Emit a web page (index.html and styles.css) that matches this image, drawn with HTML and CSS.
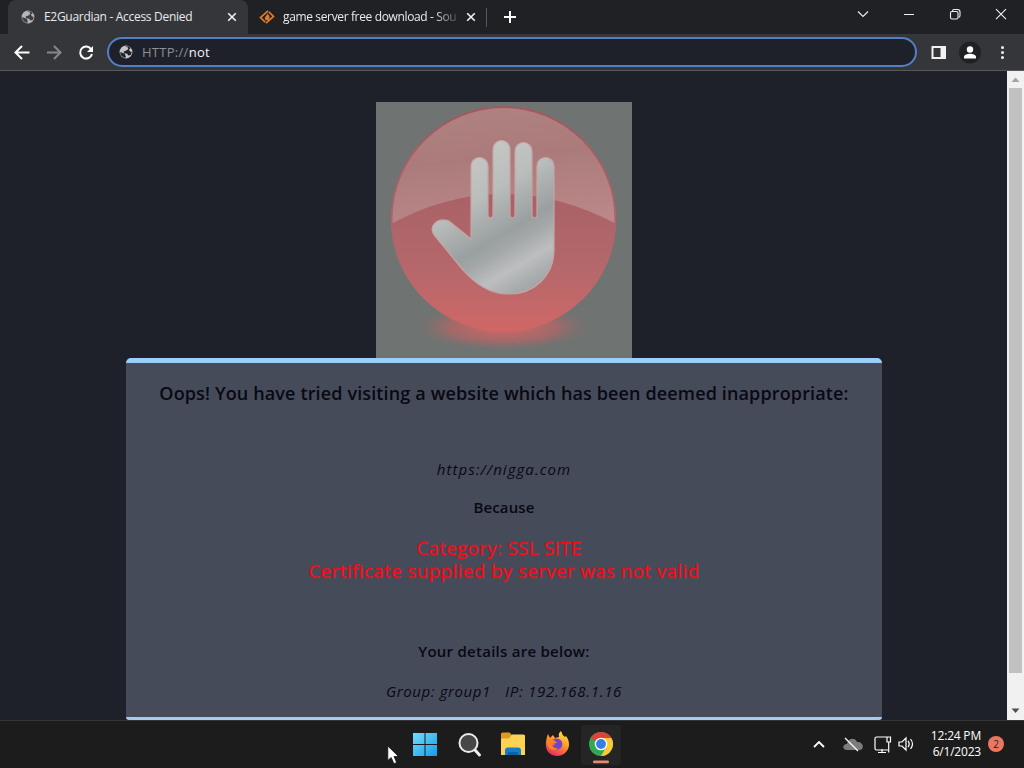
FILE: index.html
```html
<!DOCTYPE html>
<html lang="en">
<head>
<meta charset="utf-8">
<title>E2Guardian - Access Denied</title>
<link rel="stylesheet" href="styles.css">
</head>
<body>
<div class="screen">
  <header class="tabstrip">
    <div class="tab active">
      <svg class="globe" viewBox="0 0 24 24"><circle cx="12" cy="12" r="11" fill="#b4b6b8"/><path d="M2 12l8 3 2 6-3 1C5 20 2 17 2 12zM10 3l5 1 1 3-4 3-4 1 1 3 5 1 2 3 4-1 2-5-3-1-2-3 3-3-4-3z" fill="#3d3f43"/></svg>
      <span class="tab-title t1">E2Guardian - Access Denied</span>
      <svg class="x" viewBox="0 0 10 10"><path d="M1.2 1.2l7.6 7.6M8.8 1.2L1.2 8.8" stroke="#f1f1f1" stroke-width="1.6"/></svg>
    </div>
    <div class="tab second">
      <svg class="sf" viewBox="0 0 16 16"><path d="M9 1.800L1.500 8.500l4.700 4.700M9.800 2.800l4.700 4.700L7 14.200" fill="none" stroke="#dd7b2c" stroke-width="1.700"/><path d="M8.300 4.500c1.800 1.700 2.500 3 2.300 4.500-.3 1.600-1.300 2.300-2.500 2.300-1.500 0-2.400-1-2.200-2.600.2-1.200 2.100-1.900 2.400-4.200z" fill="#dd7b2c"/></svg>
      <span class="tab-title t2">game server free download - Sou</span>
      <svg class="x" viewBox="0 0 10 10"><path d="M1.2 1.2l7.600 7.600M8.800 1.200L1.200 8.800" stroke="#f1f1f1" stroke-width="1.600"/></svg>
    </div>
    <svg class="plus" viewBox="0 0 12 12"><path d="M6 0v12M0 6h12" stroke="#fff" stroke-width="2"/></svg>
    <svg class="winctl" viewBox="0 0 164 34" fill="none" stroke="#f0f0f0" stroke-width="1.100"><path d="M13 11.500l5 5 5-5M59 14.500h10M161 9.200l-10 10M151 9.200l10 10"/><rect x="105.500" y="11.500" width="7.500" height="7.500" rx="1.500"/><path d="M107.500 11.500V11c0-1 .8-1.500 1.500-1.500h3.500c1.500 0 2.500 1 2.500 2.500v3.500c0 1-.7 1.800-1.500 1.800"/></svg>
  </header>
  <nav class="toolbar">
    <svg class="navicons" viewBox="0 0 100 34" fill="none" stroke-width="2"><path d="M29.500 17.500H16M22 11l-6.500 6.500L22 24" stroke="#fff"/><path d="M47 17.500h13.500M54 11l6.500 6.500L54 24" stroke="#85878b"/><path d="M91.200 14.200A6 6 0 1 0 92 19" stroke="#fff"/><path d="M93 11v6h-6z" fill="#fff"/></svg>
    <div class="address">
      <svg class="globe" viewBox="0 0 24 24"><circle cx="12" cy="12" r="11" fill="#c2c4c6"/><path d="M2 12l8 3 2 6-3 1C5 20 2 17 2 12zM10 3l5 1 1 3-4 3-4 1 1 3 5 1 2 3 4-1 2-5-3-1-2-3 3-3-4-3z" fill="#1f222b"/></svg>
      <span class="url"><span class="scheme">HTTP://</span>not</span>
    </div>
    <svg class="tools" viewBox="0 0 107 34"><path d="M15.500 12H28v11H15.500z" fill="none" stroke="#f1f1f1" stroke-width="2"/><path d="M23.500 11H29v13h-5.500z" fill="#f1f1f1"/><circle cx="53" cy="17.500" r="11" fill="#202124"/><circle cx="53" cy="14.500" r="3.200" fill="#fff"/><path d="M47 23.500v-1.700c0-2 3.500-3.100 6-3.100s6 1.100 6 3.100v1.700z" fill="#fff"/><g fill="#f1f1f1"><circle cx="85.500" cy="12.500" r="1.500"/><circle cx="85.500" cy="17.500" r="1.500"/><circle cx="85.500" cy="22.500" r="1.500"/></g></svg>
  </nav>
  <main class="viewport">
    <div class="page">
      <svg class="stop" viewBox="0 0 256 256">
        <defs>
          <linearGradient id="red" x1="0" y1="0" x2="0" y2="1"><stop offset="0" stop-color="#a7555e"/><stop offset=".5" stop-color="#ac6469"/><stop offset=".75" stop-color="#b7686b"/><stop offset="1" stop-color="#d06766"/></linearGradient>
          <linearGradient id="gloss" x1="0" y1="0" x2=".2" y2="1"><stop offset="0" stop-color="#b18382"/><stop offset=".5" stop-color="#ab7b7c"/><stop offset="1" stop-color="#bb8788"/></linearGradient>
          <linearGradient id="palm" gradientUnits="userSpaceOnUse" x1="75" y1="50" x2="155" y2="185"><stop offset="0" stop-color="#c9cac7"/><stop offset=".35" stop-color="#b9bdbb"/><stop offset=".62" stop-color="#9a9fa0"/><stop offset=".7" stop-color="#a3a7a8"/><stop offset=".84" stop-color="#bcbebf"/><stop offset="1" stop-color="#a2a6a7"/></linearGradient>
          <radialGradient id="glow"><stop offset="0" stop-color="#d86565"/><stop offset=".6" stop-color="#ac6767" stop-opacity=".8"/><stop offset="1" stop-color="#707473" stop-opacity="0"/></radialGradient>
          <clipPath id="disc"><circle cx="127.500" cy="117" r="111"/></clipPath>
        </defs>
        <path d="M0 0h256v256H0z" fill="#6f7372"/>
        <ellipse cx="127" cy="225" rx="92" ry="25" fill="url(#glow)"/>
        <circle cx="127.500" cy="117" r="112.800" fill="url(#red)"/>
        <path d="M0 0h256v131Q192 92 127 92T0 131z" fill="url(#gloss)" clip-path="url(#disc)"/>
        <path d="M95 137V64a8.500 8.500 0 0 1 17 0v50q2.500 4 5 0V47a8.500 8.500 0 0 1 17 0v67q2.500 4 5 0V49a8.500 8.500 0 0 1 17 0v65q2.500 4 5 0V64a8.500 8.500 0 0 1 17 0v84c0 26-20 44-45 44-20 0-33-10-46-24l-28-34c-8-9 2-19 14-15z" fill="url(#palm)" stroke="#c6a5a4" stroke-width="1.200"/>
      </svg>
      <section class="card">
        <h1><span>Oops! You have tried visiting a website which has been deemed inappropriate:</span></h1>
        <p class="site"><span>https://nigga.com</span></p>
        <p class="because"><span>Because</span></p>
        <p class="reason r1"><span>Category: SSL SITE</span></p>
        <p class="reason r2"><span>Certificate supplied by server was not valid</span></p>
        <p class="below"><span>Your details are below:</span></p>
        <p class="details"><span class="grp">Group: group1</span><span class="ip">IP: 192.168.1.16</span></p>
      </section>
    </div>
    <aside class="scroll">
      <svg viewBox="0 0 17 17"><path d="M4.500 11h8l-4-4.500z" fill="#a3a3a3"/></svg>
      <div class="thumb"></div>
      <svg viewBox="0 0 17 17"><path d="M4.500 6.500h8l-4 4.500z" fill="#505050"/></svg>
    </aside>
  </main>
  <footer class="taskbar">
    <div class="apps">
      <svg viewBox="0 0 40 44"><defs><linearGradient id="win" x1="0" y1="0" x2="1" y2="1"><stop offset="0" stop-color="#76dcfa"/><stop offset="1" stop-color="#139cec"/></linearGradient></defs><path d="M8 10h11.500v11H8zM20.500 10H32v11H20.500zM8 22h11.500v11H8zM20.500 22H32v11H20.500z" fill="url(#win)"/></svg>
      <svg viewBox="0 0 40 44"><path d="M26 27l4.500 5" stroke="#eee" stroke-width="3" stroke-linecap="round"/><circle cx="19.500" cy="20" r="9" fill="#474747" stroke="#ececec" stroke-width="2"/></svg>
      <svg viewBox="0 0 40 44"><path d="M8 11q0-1.500 1.500-1.500h7l3 3H32v19H8z" fill="#d99c1d"/><path d="M8 15.500h8l3-4h11.500q1.500 0 1.500 1.500v19H8z" fill="#fcd354"/><path d="M12 32v-4.500q0-3 3-3h10q3 0 3 3V32z" fill="#167bc8"/><path d="M15 29h10v3H15z" fill="#0c60a8"/></svg>
      <svg viewBox="0 0 40 44"><defs><linearGradient id="ff" x1=".8" y1="0" x2=".3" y2="1"><stop offset="0" stop-color="#ffe84a"/><stop offset=".45" stop-color="#ff9c27"/><stop offset="1" stop-color="#ed2563"/></linearGradient></defs><path d="M11 11l2 4 3-3 2 3 4-1q-1-4 2-6 1 4 4 6l1-1c4 5 4 12 0 16-5 6-16 5-19-2-2-5-1-11 1-16z" fill="url(#ff)"/><path d="M15 17c5-4 12 0 10 6-2 5-9 5-11 0l4-1-4-3z" fill="#7145ce"/><path d="M10 18c3-2 6-2 8 0l2 2-5 1c0 3 3 5 6 4-4 5-11 1-11-7z" fill="#ff8124"/></svg>
      <div class="chrome"><svg viewBox="0 0 40 40"><circle cx="20" cy="19" r="12" fill="#32a853"/><path d="M20 19L9.600 13A12 12 0 0 1 30.400 13z" fill="#db4538"/><path d="M20 13h10.400A12 12 0 0 1 20 31l5.200-9z" fill="#fbc934"/><circle cx="20" cy="19" r="6.300" fill="#fff"/><circle cx="20" cy="19" r="4.900" fill="#347fe5"/><rect x="12" y="35.500" width="16" height="2.800" rx="1.200" fill="#e68a70"/></svg></div>
    </div>
    <svg class="tray" viewBox="0 0 110 48" fill="none" stroke="#fff" stroke-width="1.200"><path d="M9 26l5-5 5 5" stroke-width="1.800"/><path d="M42 29c-5 0-5-6 0-6 1-6 8-7 10-2 6-1 8 7 3 8z" fill="#7c7c7c" stroke="none"/><path d="M40 17l13 13"/><path d="M82 16H71.500q-1.500 0-1.500 1.500v10q0 1.500 1.500 1.500H83M77 28v3.500M73 31.500h8M82 16h3.500v5H82zM83.700 21v10.500M94 21h3l4-4v12l-4-4h-3zM103 20q2.500 3 0 6M105.500 18q4 5 0 10"/></svg>
    <div class="clock"><span class="time">12:24 PM</span><span class="date">6/1/2023</span></div>
    <div class="badge">2</div>
  </footer>
  <svg class="cursor" viewBox="0 0 13 20"><path d="M.8 1v14.500l3.400-3 2.700 6.200 2.800-1.200-2.700-6h4.500z" fill="#fff" stroke="#111" stroke-width=".8"/></svg>
</div>
</body>
</html>
```
FILE: styles.css
```css
* { box-sizing: border-box; }
body { margin: 0; font-family: "Open Sans", "Noto Sans", sans-serif; }
svg { display: block; flex: none; }
h1, p { margin: 0; }
.screen { position: relative; width: 1024px; height: 768px; overflow: hidden; display: flex; flex-direction: column; background: #1f212a; }

.tabstrip { height: 34px; flex: none; display: flex; align-items: center; background: #202124; color: #e9eaed; }
.tab { height: 34px; display: flex; align-items: center; font-size: 12px; }
.active { width: 240px; margin-left: 8px; padding-left: 13px; background: #35363a; border-radius: 8px 8px 0 0; }
.second { width: 239px; padding-left: 11px; }
.second::after { content: ""; width: 1px; height: 19px; margin-left: 10px; background: #55575b; }
.globe { width: 14px; height: 14px; }
.sf { width: 16px; height: 16px; }
.tab-title { white-space: nowrap; line-height: 18px; flex: none; }
.t1 { width: 183px; margin-left: 9px; letter-spacing: -.3px; }
.t2 { width: 175px; margin: 0 8px; letter-spacing: -.36px; -webkit-mask-image: linear-gradient(90deg, #000 150px, transparent 180px); mask-image: linear-gradient(90deg, #000 150px, transparent 180px); }
.x { width: 10px; height: 10px; }
.plus { width: 12px; height: 12px; margin-left: 17px; }
.winctl { width: 164px; height: 34px; margin-left: auto; margin-right: 15px; }

.toolbar { height: 37px; flex: none; display: flex; align-items: center; background: #35363a; border-bottom: 1px solid #56575b; }
.navicons { width: 100px; height: 34px; }
.address { width: 810px; height: 30px; margin-left: 7px; padding-left: 10px; display: flex; align-items: center; border: 2px solid #547fc7; border-radius: 15px; background: #1f212a; color: #f1f3f4; font-size: 13px; }
.url { margin-left: 9px; letter-spacing: .28px; }
.scheme { color: #8c8f94; }
.tools { width: 107px; height: 34px; }

.viewport { height: 649px; flex: none; display: flex; background: #1f212a; }
.page { width: 1007px; display: flex; flex-direction: column; align-items: center; padding-top: 31px; }
.stop { width: 256px; height: 256px; }
.card { width: 756px; height: 362px; margin-left: 1px; border-top: 5px solid #9dcef8; border-bottom: 3px solid #a3caf1; border-radius: 5px 5px 3px 3px; background: #464b5a; color: #080912; text-align: center; white-space: nowrap; overflow: hidden; }
.card h1 { margin-top: 17px; line-height: 26px; font-size: 18px; font-weight: 600; letter-spacing: .135px; }
.card p { line-height: 24px; font-size: 15px; }
.card .site { margin-top: 51px; font-style: italic; letter-spacing: 1.050px; }
.card .because { margin-top: 14px; font-weight: 600; letter-spacing: .15px; }
.card .reason { color: #f80a16; font-size: 18.500px; font-weight: 500; letter-spacing: .530px; -webkit-text-stroke: .3px #f80a16; }
.card .r1 { margin-top: 17px; padding-right: 10px; letter-spacing: .45px; }
.card .r2 { line-height: 22px; }
.card .below { margin-top: 57px; font-weight: 600; letter-spacing: .26px; }
.card .details { margin-top: 16px; font-style: italic; letter-spacing: .6px; }
.ip { margin-left: 14px; letter-spacing: .7px; }
.scroll { width: 17px; background: #f1f1f1; }
.scroll svg { width: 17px; height: 17px; }
.thumb { width: 13px; height: 585px; margin: 0 0 29px 2px; background: #c1c1c1; }

.taskbar { height: 48px; flex: none; display: flex; align-items: center; background: #1c1c1c; border-top: 1px solid #333437; color: #fff; }
.apps { display: flex; align-items: center; gap: 4px; margin-left: 405px; }
.apps > svg { width: 40px; height: 44px; }
.chrome { width: 40px; height: 40px; border-radius: 4px; background: #262525; }
.chrome svg { width: 40px; height: 40px; }
.tray { width: 110px; height: 48px; margin-left: 184px; }
.clock { width: 66px; text-align: right; font-size: 12px; line-height: 16px; display: flex; flex-direction: column; letter-spacing: -.2px; padding-bottom: 1px; }
.badge { width: 16px; height: 16px; margin: 0 0 1px 7px; border-radius: 50%; background: #ed7662; color: #282222; text-align: center; font-size: 10px; line-height: 16px; }
.cursor { position: absolute; left: 387px; top: 745px; width: 13px; height: 20px; }
```
